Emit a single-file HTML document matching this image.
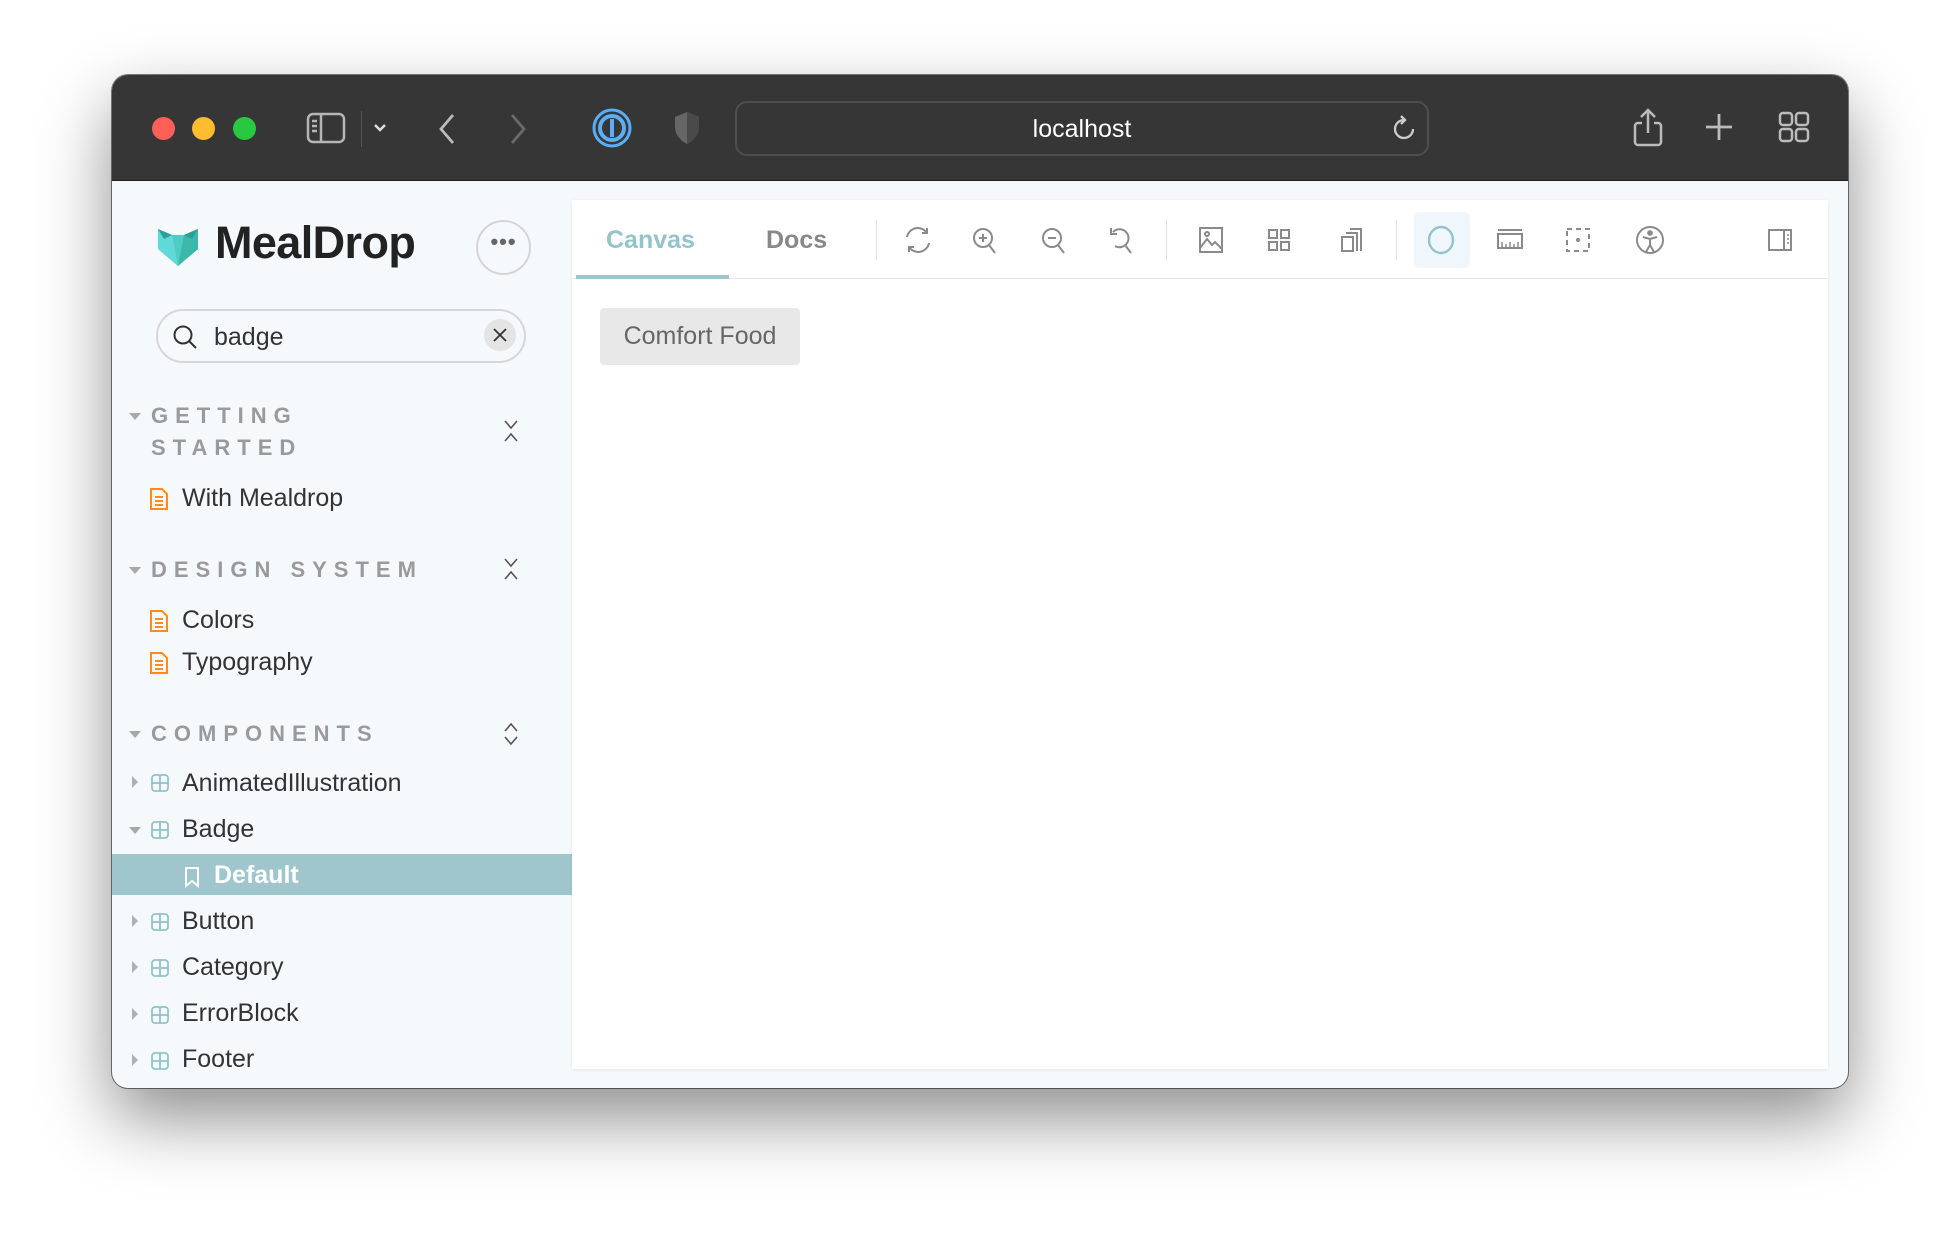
<!DOCTYPE html>
<html><head><meta charset="utf-8"><style>
*{margin:0;padding:0;box-sizing:border-box}
body{width:1960px;height:1236px;background:#fff;position:relative;overflow:hidden;font-family:"Liberation Sans",sans-serif}
.a{position:absolute}
.win{left:112px;top:75px;width:1736px;height:1013px;border-radius:16px;background:#f6f9fc;overflow:hidden;box-shadow:0 30px 70px rgba(0,0,0,.45),0 0 0 1px rgba(0,0,0,.5)}
.tb{left:0;top:0;width:1736px;height:106px;background:#363636;border-bottom:1px solid #1e1e1e}
.dot{width:23px;height:23px;border-radius:50%;top:42px}
.side{color:#333;font-size:25px}
.hdr{font-size:22px;font-weight:bold;color:#9a9a9a;letter-spacing:7px;line-height:32px}
.tri{width:0;height:0;border-left:6px solid transparent;border-right:6px solid transparent;border-top:7px solid #a8a8a8}
.trr{width:0;height:0;border-top:6px solid transparent;border-bottom:6px solid transparent;border-left:6px solid #b0b0b0}
</style></head><body>
<div class="a win">
 <div class="a tb">
  <div class="a dot" style="left:40px;background:#fe5f57"></div>
  <div class="a dot" style="left:80px;background:#febc2e"></div>
  <div class="a dot" style="left:121px;background:#28c840"></div>
  <svg class="a" style="left:194px;top:37px" width="40" height="32" viewBox="0 0 40 32" fill="none" stroke="#b5b5b5" stroke-width="2.5"><rect x="2" y="2" width="36" height="28" rx="5"/><line x1="15" y1="2" x2="15" y2="30"/><line x1="6" y1="9" x2="11" y2="9"/><line x1="6" y1="14" x2="11" y2="14"/><line x1="6" y1="19" x2="11" y2="19"/></svg>
  <div class="a" style="left:249px;top:36px;width:1px;height:36px;background:#555"></div>
  <svg class="a" style="left:261px;top:48px" width="14" height="10" viewBox="0 0 14 10" fill="none" stroke="#ddd" stroke-width="2.5"><path d="M2 2l5 5 5-5"/></svg>
  <svg class="a" style="left:325px;top:38px" width="20" height="32" viewBox="0 0 20 32" fill="none" stroke="#bbb" stroke-width="2.8"><path d="M16 2L4 16l12 14"/></svg>
  <svg class="a" style="left:396px;top:38px" width="20" height="32" viewBox="0 0 20 32" fill="none" stroke="#6a6a6a" stroke-width="2.8"><path d="M4 2l12 14L4 30"/></svg>
  <svg class="a" style="left:480px;top:33px" width="40" height="40" viewBox="0 0 40 40"><circle cx="20" cy="20" r="18" fill="none" stroke="#5aaef7" stroke-width="3"/><circle cx="20" cy="20" r="12" fill="none" stroke="#5aaef7" stroke-width="4"/><rect x="18" y="11" width="4" height="18" fill="#5aaef7"/></svg>
  <svg class="a" style="left:560px;top:35px" width="30" height="36" viewBox="0 0 30 36"><path d="M15 2L3 7v10c0 8 6 14 12 17 6-3 12-9 12-17V7z" fill="#666"/><path d="M15 2v32c6-3 12-9 12-17V7z" fill="#4a4a4a"/></svg>
  <div class="a" style="left:623px;top:26px;width:694px;height:55px;border:2px solid #4e4e4e;border-radius:12px;color:#fff;font-size:25px;text-align:center;line-height:53px">localhost</div>
  <svg class="a" style="left:1280px;top:40px" width="24" height="28" viewBox="0 0 24 28" fill="none" stroke="#ccc" stroke-width="2.3"><path d="M12 5a9 9 0 1 0 9 9"/><path d="M9 1l4 4-4 4"/></svg>
  <svg class="a" style="left:1520px;top:33px" width="32" height="40" viewBox="0 0 32 40" fill="none" stroke="#bbb" stroke-width="2.5"><path d="M10 15H6a3 3 0 0 0-3 3v16a3 3 0 0 0 3 3h20a3 3 0 0 0 3-3V18a3 3 0 0 0-3-3h-4"/><path d="M16 25V3M9 9l7-7 7 7"/></svg>
  <svg class="a" style="left:1593px;top:38px" width="28" height="28" viewBox="0 0 28 28" stroke="#bbb" stroke-width="2.8"><path d="M14 1v26M1 14h26"/></svg>
  <svg class="a" style="left:1666px;top:36px" width="32" height="32" viewBox="0 0 32 32" fill="none" stroke="#bbb" stroke-width="2.5"><rect x="2" y="2" width="12" height="12" rx="3"/><rect x="18" y="2" width="12" height="12" rx="3"/><rect x="2" y="18" width="12" height="12" rx="3"/><rect x="18" y="18" width="12" height="12" rx="3"/></svg>
 </div>

 <!-- sidebar -->
 <svg class="a" style="left:44px;top:152px" width="44" height="40" viewBox="0 0 44 40"><path d="M2 2l14 6h12l14-6v20L22 39 2 22z" fill="#4ecdc4"/><path d="M2 2l14 6 6 31L2 22z" fill="#62d9d9"/><path d="M42 2L28 8 22 39l20-17z" fill="#3bb8a8"/><path d="M2 2l14 6-8 4z" fill="#2aa198"/><path d="M42 2L28 8l8 4z" fill="#2aa198"/></svg>
 <div class="a" style="left:103px;top:142px;font-size:45px;font-weight:bold;color:#222;letter-spacing:-0.6px">MealDrop</div>
 <div class="a" style="left:364px;top:145px;width:55px;height:55px;border-radius:50%;border:2px solid #d4d4d4;text-align:center;font-size:22px;line-height:40px;color:#666;font-weight:bold;letter-spacing:1px">•••</div>
 <div class="a" style="left:44px;top:234px;width:370px;height:54px;border-radius:27px;border:2px solid #d6d6d6;background:#f6f9fc"></div>
 <svg class="a" style="left:60px;top:249px" width="26" height="26" viewBox="0 0 26 26" fill="none" stroke="#333" stroke-width="2"><circle cx="11" cy="11" r="8.5"/><path d="M17 17l7 7"/></svg>
 <div class="a side" style="left:102px;top:248px">badge</div>
 <div class="a" style="left:372px;top:244px;width:32px;height:32px;border-radius:50%;background:#e4e4e4"></div>
 <svg class="a" style="left:380px;top:252px" width="16" height="16" viewBox="0 0 16 16" stroke="#333" stroke-width="1.8"><path d="M2 2l12 12M14 2L2 14"/></svg>

 <div class="a tri" style="left:17px;top:338px"></div>
 <div class="a hdr" style="left:39px;top:325px;width:220px">GETTING STARTED</div>
 <svg class="a" style="left:391px;top:344px" width="16" height="24" viewBox="0 0 16 24" fill="none" stroke="#555" stroke-width="1.6"><path d="M2 2l6 7 6-7M2 22l6-7 6 7"/></svg>
 <svg class="a" style="left:37px;top:412px" width="20" height="24" viewBox="0 0 20 24" fill="none" stroke="#ff8c1a" stroke-width="2"><path d="M2 2h11l5 5v15H2z"/><path d="M6 10h8M6 14h8M6 18h8"/></svg>
 <div class="a side" style="left:70px;top:409px">With Mealdrop</div>

 <div class="a tri" style="left:17px;top:492px"></div>
 <div class="a hdr" style="left:39px;top:479px">DESIGN SYSTEM</div>
 <svg class="a" style="left:391px;top:482px" width="16" height="24" viewBox="0 0 16 24" fill="none" stroke="#555" stroke-width="1.6"><path d="M2 2l6 7 6-7M2 22l6-7 6 7"/></svg>
 <svg class="a" style="left:37px;top:534px" width="20" height="24" viewBox="0 0 20 24" fill="none" stroke="#ff8c1a" stroke-width="2"><path d="M2 2h11l5 5v15H2z"/><path d="M6 10h8M6 14h8M6 18h8"/></svg>
 <div class="a side" style="left:70px;top:531px">Colors</div>
 <svg class="a" style="left:37px;top:576px" width="20" height="24" viewBox="0 0 20 24" fill="none" stroke="#ff8c1a" stroke-width="2"><path d="M2 2h11l5 5v15H2z"/><path d="M6 10h8M6 14h8M6 18h8"/></svg>
 <div class="a side" style="left:70px;top:573px">Typography</div>

 <div class="a tri" style="left:17px;top:656px"></div>
 <div class="a hdr" style="left:39px;top:643px">COMPONENTS</div>
 <svg class="a" style="left:391px;top:647px" width="16" height="24" viewBox="0 0 16 24" fill="none" stroke="#555" stroke-width="1.6"><path d="M2 9l6-7 6 7M2 15l6 7 6-7"/></svg>

 <div class="a trr" style="left:20px;top:701px"></div>
 <svg class="a" style="left:39px;top:699px" width="18" height="18" viewBox="0 0 18 18" fill="none" stroke="#8fc3cc" stroke-width="1.8"><rect x="1" y="1" width="16" height="16" rx="3"/><path d="M9 1v16M1 9h16"/></svg>
 <div class="a side" style="left:70px;top:694px">AnimatedIllustration</div>
 <div class="a tri" style="left:17px;top:752px"></div>
 <svg class="a" style="left:39px;top:746px" width="18" height="18" viewBox="0 0 18 18" fill="none" stroke="#8fc3cc" stroke-width="1.8"><rect x="1" y="1" width="16" height="16" rx="3"/><path d="M9 1v16M1 9h16"/></svg>
 <div class="a side" style="left:70px;top:740px">Badge</div>
 <div class="a" style="left:0;top:779px;width:460px;height:41px;background:#a0c6cd"></div>
 <svg class="a" style="left:72px;top:791px" width="16" height="22" viewBox="0 0 16 22" fill="none" stroke="#fff" stroke-width="2"><path d="M2 2h12v18l-6-5-6 5z"/></svg>
 <div class="a side" style="left:102px;top:786px;color:#fff;font-weight:bold">Default</div>
 <div class="a trr" style="left:20px;top:840px"></div>
 <svg class="a" style="left:39px;top:838px" width="18" height="18" viewBox="0 0 18 18" fill="none" stroke="#8fc3cc" stroke-width="1.8"><rect x="1" y="1" width="16" height="16" rx="3"/><path d="M9 1v16M1 9h16"/></svg>
 <div class="a side" style="left:70px;top:832px">Button</div>
 <div class="a trr" style="left:20px;top:886px"></div>
 <svg class="a" style="left:39px;top:884px" width="18" height="18" viewBox="0 0 18 18" fill="none" stroke="#8fc3cc" stroke-width="1.8"><rect x="1" y="1" width="16" height="16" rx="3"/><path d="M9 1v16M1 9h16"/></svg>
 <div class="a side" style="left:70px;top:878px">Category</div>
 <div class="a trr" style="left:20px;top:933px"></div>
 <svg class="a" style="left:39px;top:931px" width="18" height="18" viewBox="0 0 18 18" fill="none" stroke="#8fc3cc" stroke-width="1.8"><rect x="1" y="1" width="16" height="16" rx="3"/><path d="M9 1v16M1 9h16"/></svg>
 <div class="a side" style="left:70px;top:924px">ErrorBlock</div>
 <div class="a trr" style="left:20px;top:979px"></div>
 <svg class="a" style="left:39px;top:977px" width="18" height="18" viewBox="0 0 18 18" fill="none" stroke="#8fc3cc" stroke-width="1.8"><rect x="1" y="1" width="16" height="16" rx="3"/><path d="M9 1v16M1 9h16"/></svg>
 <div class="a side" style="left:70px;top:970px">Footer</div>

 <!-- main panel -->
 <div class="a" style="left:460px;top:125px;width:1256px;height:869px;background:#fff;box-shadow:0 1px 4px rgba(0,0,0,.08)">
  <div class="a" style="left:0;top:78px;width:1256px;height:1px;background:#e6e6e6"></div>
  <div class="a" style="left:4px;top:75px;width:153px;height:4px;background:#9ec6cd"></div>
  <div class="a" style="left:34px;top:26px;font-size:25px;font-weight:bold;color:#95c3cc">Canvas</div>
  <div class="a" style="left:194px;top:26px;font-size:25px;font-weight:bold;color:#888">Docs</div>
  <div class="a" style="left:304px;top:20px;width:1px;height:40px;background:#e2e2e2"></div>
  <div class="a" style="left:594px;top:20px;width:1px;height:40px;background:#e2e2e2"></div>
  <div class="a" style="left:824px;top:20px;width:1px;height:40px;background:#e2e2e2"></div>
  <div class="a" style="left:842px;top:12px;width:56px;height:56px;border-radius:6px;background:#f0f7fc"></div>
  <svg class="a" style="left:0;top:0" width="1256" height="78" fill="none" stroke="#8a8a8a" stroke-width="2">
   <g transform="translate(346,40)"><path d="M-11 -3a11 11 0 0 1 20-4M11 3a11 11 0 0 1-20 4"/><path d="M9-12v5h-5M-9 12v-5h5"/></g>
   <g transform="translate(413,40)"><circle cx="-2" cy="-2" r="9"/><path d="M4 5l6 8M-6-2h8M-2-6v8"/></g>
   <g transform="translate(482,40)"><circle cx="-2" cy="-2" r="9"/><path d="M4 5l6 8M-6-2h8"/></g>
   <g transform="translate(549,40)"><path d="M-8-8a9 9 0 1 1 2 14"/><path d="M-10-12v6h6M4 5l6 8"/></g>
   <g transform="translate(639,40)"><rect x="-11" y="-12" width="22" height="24"/><path d="M-11 8l7-9 5 6 3-3 7 7"/><circle cx="-4" cy="-6" r="2"/></g>
   <g transform="translate(707,40)"><rect x="-10" y="-10" width="8" height="8"/><rect x="2" y="-10" width="8" height="8"/><rect x="-10" y="2" width="8" height="8"/><rect x="2" y="2" width="8" height="8"/></g>
   <g transform="translate(779,40)"><rect x="-9" y="-3" width="11" height="14"/><path d="M-5-7h11v18M-1-11h11v22"/></g>
   <g transform="translate(869,40)"><ellipse cx="0" cy="0" rx="12" ry="13" stroke="#93c4cc" stroke-width="2.4"/></g>
   <g transform="translate(938,40)"><path d="M-12-10h24M-12-6h24v14h-24z"/><path d="M-8 2v6M-4 4v4M0 2v6M4 4v4M8 2v6" stroke-width="1.5"/></g>
   <g transform="translate(1006,40)"><rect x="-11" y="-11" width="22" height="22" stroke-dasharray="5 4"/><circle cx="0" cy="0" r="1" fill="#8a8a8a"/></g>
   <g transform="translate(1078,40)"><circle r="13"/><circle cx="0" cy="-7" r="1.8" fill="#8a8a8a"/><path d="M-7-3l7 2 7-2M0-1v6l-4 7M0 5l4 7"/></g>
   <g transform="translate(1208,40)"><rect x="-11" y="-10" width="22" height="20"/><path d="M4-10v20"/><path d="M7-5h2M7-1h2M7 3h2" stroke-width="1.5"/></g>
  </svg>
  <div class="a" style="left:28px;top:108px;width:200px;height:57px;background:#e8e8e8;border-radius:4px;color:#666;font-size:25px;line-height:57px;text-align:center">Comfort Food</div>
 </div>
</div>
</body></html>
